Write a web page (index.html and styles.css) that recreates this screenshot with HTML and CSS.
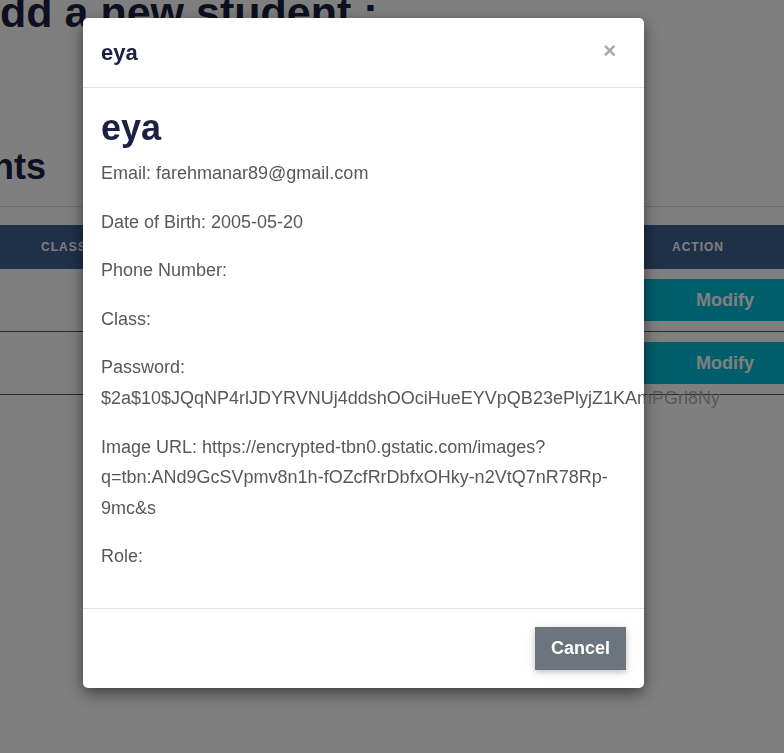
FILE: index.html
```html
<!DOCTYPE html>
<html lang="en">
<head>
<meta charset="utf-8">
<title>Students</title>
<link rel="stylesheet" href="styles.css">
</head>
<body>
<div class="page">
  <h2 class="add-title">Add a new student :</h2>
  <h2 class="list-title">Students</h2>
  <hr class="rule">
  <table class="students">
    <colgroup>
      <col class="c-class">
      <col class="c-mid">
      <col class="c-action">
    </colgroup>
    <thead>
      <tr>
        <th class="th-class">Class</th>
        <th></th>
        <th class="th-action">Action</th>
      </tr>
    </thead>
    <tbody>
      <tr>
        <td></td>
        <td></td>
        <td><button class="btn-modify">Modify</button></td>
      </tr>
      <tr>
        <td></td>
        <td></td>
        <td><button class="btn-modify">Modify</button></td>
      </tr>
    </tbody>
  </table>
</div>

<div class="backdrop"></div>

<div class="modal">
  <div class="modal-content">
    <div class="modal-header">
      <h5 class="modal-title">eya</h5>
      <button class="close" aria-label="Close">&times;</button>
    </div>
    <div class="modal-body">
      <h1 class="student-name">eya</h1>
      <p>Email: farehmanar89@gmail.com</p>
      <p>Date of Birth: 2005-05-20</p>
      <p>Phone Number:</p>
      <p>Class:</p>
      <p>Password: $2a$10$JQqNP4rlJDYRVNUj4ddshOOciHueEYVpQB23ePlyjZ1KAmPGrl8Ny</p>
      <p>Image URL: https://encrypted-tbn0.gstatic.com/images?q=tbn:ANd9GcSVpmv8n1h-fOZcfRrDbfxOHky-n2VtQ7nR78Rp-9mc&amp;s</p>
      <p>Role:</p>
    </div>
    <div class="modal-footer">
      <button class="btn-cancel">Cancel</button>
    </div>
  </div>
</div>
</body>
</html>
```

FILE: styles.css
```css
html, body {
  margin: 0;
  padding: 0;
  overflow: hidden;
  background: #ffffff;
  font-family: "Liberation Sans", Arial, sans-serif;
}

.page {
  width: 900px;
}

.add-title {
  margin: -14px 0 0 -31px;
  font-size: 43px;
  line-height: 52px;
  font-weight: 700;
  color: #1b2142;
  white-space: nowrap;
}

.list-title {
  margin: 107px 0 0 -108px;
  font-size: 36px;
  line-height: 43px;
  font-weight: 700;
  color: #1b2142;
  white-space: nowrap;
}

.rule {
  margin: 18px 0 0 0;
  border: 0;
  border-top: 1px solid #dcdcdc;
  height: 0;
}

.students {
  margin-top: 18px;
  width: 840px;
  table-layout: fixed;
  border-collapse: collapse;
}

.c-class { width: 200px; }
.c-mid { width: 440px; }
.c-action { width: 200px; }

.students thead tr {
  background: #3e6092;
}

.students th {
  height: 44px;
  padding: 0;
  text-align: left;
  color: #ffffff;
  font-size: 12px;
  font-weight: 700;
  letter-spacing: 1px;
  text-transform: uppercase;
}

.th-class { padding-left: 41px !important; }
.th-action { padding-left: 32px !important; }

.students td {
  padding: 10px 0;
  border-bottom: 1px solid #555555;
}

.btn-modify {
  display: block;
  width: 170px;
  height: 42px;
  border: 0;
  padding: 0;
  background: #00bcd4;
  color: #ffffff;
  font-family: "Liberation Sans", Arial, sans-serif;
  font-size: 18px;
  font-weight: 700;
}

.backdrop {
  position: fixed;
  inset: 0;
  background: rgba(0, 0, 0, 0.5);
}

.modal {
  position: absolute;
  top: 18px;
  left: 83px;
  width: 561px;
}

.modal-content {
  background: #ffffff;
  border-radius: 5px;
  box-shadow: 0 5px 15px rgba(0, 0, 0, 0.5);
}

.modal-header {
  display: flex;
  align-items: center;
  justify-content: space-between;
  padding: 18px 28px 18px 18px;
  border-bottom: 1px solid #e2e2e2;
}

.modal-title {
  margin: 0;
  font-size: 22px;
  line-height: 33px;
  font-weight: 700;
  color: #1b2142;
}

.close {
  border: 0;
  background: none;
  padding: 0;
  margin-top: -4px;
  font-family: "Liberation Sans", Arial, sans-serif;
  font-size: 22px;
  line-height: 1;
  font-weight: 700;
  color: #a9a9a9;
}

.modal-body {
  padding: 18px;
  color: #585858;
}

.student-name {
  margin: 0 0 9px 0;
  font-size: 36px;
  line-height: 43px;
  font-weight: 700;
  color: #1b2142;
}

.modal-body p {
  margin: 0 0 18px 0;
  font-size: 18px;
  line-height: 30.6px;
}

.modal-footer {
  display: flex;
  justify-content: flex-end;
  padding: 18px;
  border-top: 1px solid #e2e2e2;
}

.btn-cancel {
  border: 0;
  padding: 8px 16px;
  background: #6c757d;
  color: #ffffff;
  font-family: "Liberation Sans", Arial, sans-serif;
  font-size: 18px;
  line-height: 27px;
  font-weight: 700;
  box-shadow: 0 2px 5px rgba(0, 0, 0, 0.16), 0 2px 10px rgba(0, 0, 0, 0.12);
}
```
